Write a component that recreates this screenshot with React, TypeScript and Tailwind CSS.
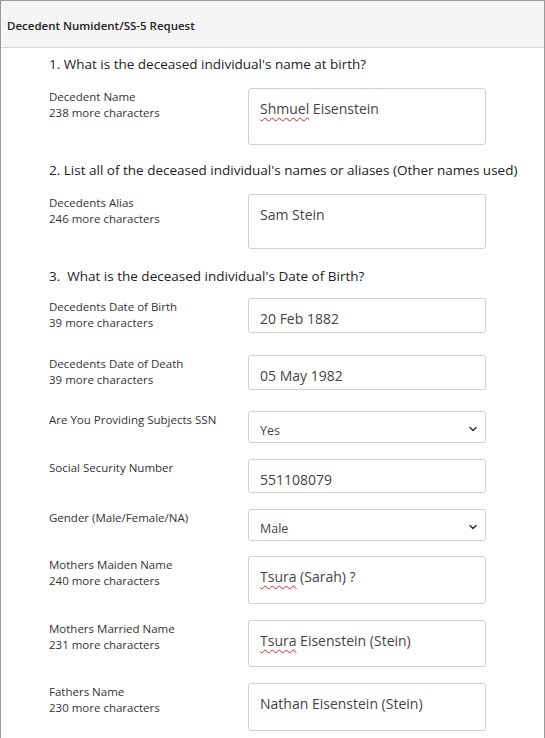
import { ChevronDown } from "lucide-react";

const font = { fontFamily: '"Open Sans", "Noto Sans", sans-serif' };

type FieldProps = {
  label: string;
  hint?: string;
  h: string;
  mt: string;
  select?: boolean;
  children: React.ReactNode;
};

const Field = ({ label, hint, h, mt, select, children }: FieldProps) => (
  <div className={`flex ${mt}`}>
    <div className="w-[199px] pt-[1px] text-[11.5px] leading-[16px] text-[#333]">
      <div>{label}</div>
      {hint ? <div>{hint}</div> : null}
    </div>
    <div
      className={`relative w-[238px] ${h} rounded-[3px] border border-[#d0d0d0] bg-white pl-[11px] ${
        select ? "pt-[11px] text-[12.5px]" : "pt-[12px] text-[14px]"
      } leading-[16px] text-[#444]`}
    >
      {children}
      {select ? (
        <ChevronDown className="absolute right-[6px] top-[11px] h-[12px] w-[12px] text-[#333]" strokeWidth={3} />
      ) : null}
    </div>
  </div>
);

const Typo = ({ children }: { children: React.ReactNode }) => (
  <span className="underline decoration-wavy decoration-[#e02020] decoration-1 underline-offset-[3px]">{children}</span>
);

export default function App() {
  return (
    <div style={font} className="w-[545px] h-[738px] overflow-hidden bg-white border-l border-t border-r border-[#9a9a9a]">
      <div className="h-[47px] bg-[#f5f5f5] border-b border-[#d8d8d8] flex items-center pl-[6px] pt-[3px] text-[11.5px] font-semibold text-[#222]">
        Decedent Numident/SS-5 Request
      </div>
      <div className="pl-[48px]">
        <div className="mt-[7px] text-[13.5px] leading-[18px] text-[#222] whitespace-nowrap">
          1. What is the deceased individual's name at birth?
        </div>
        <Field label="Decedent Name" hint="238 more characters" h="h-[57px]" mt="mt-[15px]">
          <Typo>Shmuel</Typo> Eisenstein
        </Field>
        <div className="mt-[16px] text-[13.5px] leading-[18px] text-[#222] whitespace-nowrap">
          2. List all of the deceased individual's names or aliases (Other names used)
        </div>
        <Field label="Decedents Alias" hint="246 more characters" h="h-[55px]" mt="mt-[15px]">
          Sam Stein
        </Field>
        <div className="mt-[18px] text-[13.5px] leading-[18px] text-[#222] whitespace-nowrap">
          3.&nbsp; What is the deceased individual's Date of Birth?
        </div>
        <Field label="Decedents Date of Birth" hint="39 more characters" h="h-[35px]" mt="mt-[13px]">
          20 Feb 1882
        </Field>
        <Field label="Decedents Date of Death" hint="39 more characters" h="h-[35px]" mt="mt-[22px]">
          05 May 1982
        </Field>
        <Field label="Are You Providing Subjects SSN" h="h-[32px]" mt="mt-[21px]" select>
          Yes
        </Field>
        <Field label="Social Security Number" h="h-[34px]" mt="mt-[16px]">
          551108079
        </Field>
        <Field label="Gender (Male/Female/NA)" h="h-[32px]" mt="mt-[16px]" select>
          Male
        </Field>
        <Field label="Mothers Maiden Name" hint="240 more characters" h="h-[48px]" mt="mt-[15px]">
          <Typo>Tsura</Typo> (Sarah) ?
        </Field>
        <Field label="Mothers Married Name" hint="231 more characters" h="h-[47px]" mt="mt-[16px]">
          <Typo>Tsura</Typo> Eisenstein (Stein)
        </Field>
        <Field label="Fathers Name" hint="230 more characters" h="h-[48px]" mt="mt-[16px]">
          Nathan Eisenstein (Stein)
        </Field>
      </div>
    </div>
  );
}
